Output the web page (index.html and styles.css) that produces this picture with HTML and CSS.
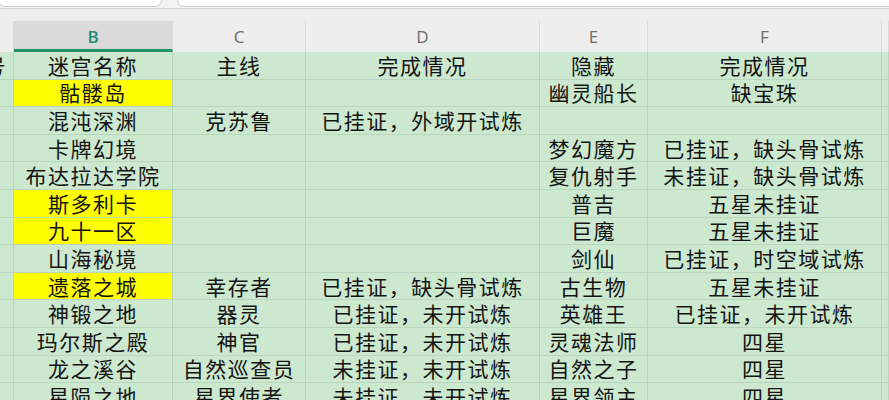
FILE: index.html
```html
<!DOCTYPE html>
<html lang="zh">
<head>
<meta charset="utf-8">
<link rel="stylesheet" href="styles.css">
</head>
<body>
<div class="toolbar">
  <div class="namebox"></div>
  <div class="formulabox"></div>
</div>
<div class="colheads">
  <div class="ch"></div>
  <div class="ch active">B</div>
  <div class="ch">C</div>
  <div class="ch">D</div>
  <div class="ch">E</div>
  <div class="ch">F</div>
  <div class="ch"></div>
</div>
<div class="sheet">
  <div class="c a"><span>号</span></div><div class="c">迷宫名称</div><div class="c">主线</div><div class="c">完成情况</div><div class="c">隐藏</div><div class="c">完成情况</div><div class="c"></div>
  <div class="c a"></div><div class="c y">骷髅岛</div><div class="c"></div><div class="c"></div><div class="c">幽灵船长</div><div class="c">缺宝珠</div><div class="c"></div>
  <div class="c a"></div><div class="c">混沌深渊</div><div class="c">克苏鲁</div><div class="c">已挂证，外域开试炼</div><div class="c"></div><div class="c"></div><div class="c"></div>
  <div class="c a"></div><div class="c">卡牌幻境</div><div class="c"></div><div class="c"></div><div class="c">梦幻魔方</div><div class="c">已挂证，缺头骨试炼</div><div class="c"></div>
  <div class="c a"></div><div class="c">布达拉达学院</div><div class="c"></div><div class="c"></div><div class="c">复仇射手</div><div class="c">未挂证，缺头骨试炼</div><div class="c"></div>
  <div class="c a"></div><div class="c y">斯多利卡</div><div class="c"></div><div class="c"></div><div class="c">普吉</div><div class="c">五星未挂证</div><div class="c"></div>
  <div class="c a"></div><div class="c y">九十一区</div><div class="c"></div><div class="c"></div><div class="c">巨魔</div><div class="c">五星未挂证</div><div class="c"></div>
  <div class="c a"></div><div class="c">山海秘境</div><div class="c"></div><div class="c"></div><div class="c">剑仙</div><div class="c">已挂证，时空域试炼</div><div class="c"></div>
  <div class="c a"></div><div class="c y">遗落之城</div><div class="c">幸存者</div><div class="c">已挂证，缺头骨试炼</div><div class="c">古生物</div><div class="c">五星未挂证</div><div class="c"></div>
  <div class="c a"></div><div class="c">神锻之地</div><div class="c">器灵</div><div class="c">已挂证，未开试炼</div><div class="c">英雄王</div><div class="c">已挂证，未开试炼</div><div class="c"></div>
  <div class="c a"></div><div class="c">玛尔斯之殿</div><div class="c">神官</div><div class="c">已挂证，未开试炼</div><div class="c">灵魂法师</div><div class="c">四星</div><div class="c"></div>
  <div class="c a"></div><div class="c">龙之溪谷</div><div class="c">自然巡查员</div><div class="c">未挂证，未开试炼</div><div class="c">自然之子</div><div class="c">四星</div><div class="c"></div>
  <div class="c a"></div><div class="c">星陨之地</div><div class="c">星界使者</div><div class="c">未挂证，未开试炼</div><div class="c">星界领主</div><div class="c">四星</div><div class="c"></div>
</div>
</body>
</html>
```

FILE: styles.css
```css
html, body {
  margin: 0;
  padding: 0;
  width: 889px;
  height: 400px;
  overflow: hidden;
  background: #eeeeee;
  font-family: "Noto Sans CJK SC", "Noto Sans", sans-serif;
}

.toolbar {
  display: flex;
  height: 8px;
  background: #f3f3f3;
  border-bottom: 1px solid #d2d2d2;
  overflow: hidden;
}

.namebox,
.formulabox {
  height: 20px;
  margin-top: -13px;
  background: #ffffff;
  border: 1px solid #cdcdcd;
  border-radius: 7px;
  box-sizing: border-box;
}

.namebox {
  width: 164px;
  margin-left: -2px;
}

.formulabox {
  flex: 1;
  margin-left: 15px;
  margin-right: -10px;
}

.colheads {
  display: grid;
  grid-template-columns: 14px 159px 133px 234px 108px 234px 1fr;
  height: 43px;
  align-items: end;
  background: #eeeeee;
}

.ch {
  height: 31px;
  box-sizing: border-box;
  border-right: 1px solid #d9d9d9;
  display: flex;
  align-items: center;
  justify-content: center;
  font-family: "Open Sans", "Liberation Sans", sans-serif;
  font-size: 17px;
  color: #6b6b6b;
}

.ch.active {
  background: #dadada;
  color: #1f8a78;
  font-weight: 600;
  border-bottom: 3px solid #1f9363;
  padding-top: 3px;
}

.sheet {
  display: grid;
  grid-template-columns: 14px 159px 133px 234px 108px 234px 1fr;
  grid-auto-rows: 27.6px;
  background: #cce8cf;
}

.c {
  box-sizing: border-box;
  border-right: 1px solid #b9d5bd;
  border-bottom: 1px solid #b9d5bd;
  display: flex;
  align-items: center;
  justify-content: center;
  font-size: 21px;
  line-height: 27px;
  color: #141414;
  white-space: nowrap;
  letter-spacing: 1.5px;
  background: #cce8cf;
}

.c.a {
  justify-content: flex-end;
  padding-right: 6px;
  overflow: hidden;
}

.c.y {
  background: #ffff00;
}
```
